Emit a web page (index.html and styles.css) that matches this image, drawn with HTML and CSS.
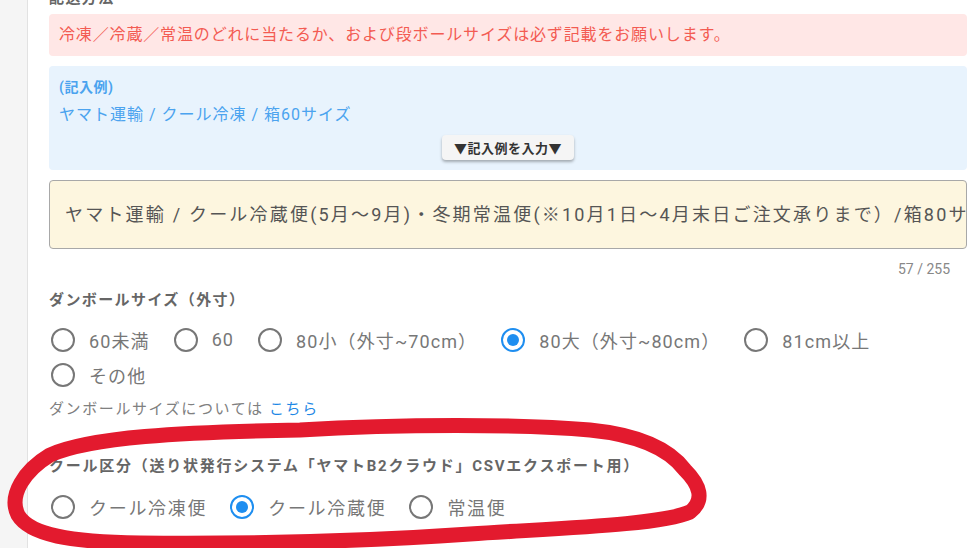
FILE: index.html
```html
<!DOCTYPE html>
<html lang="ja">
<head>
<meta charset="utf-8">
<title>配送方法</title>
<link rel="stylesheet" href="styles.css">
</head>
<body>
<div class="page">
  <aside class="rail"></aside>
  <main class="content">
    <div class="field-label cut">配送方法</div>
    <div class="alert">冷凍／冷蔵／常温のどれに当たるか、および段ボールサイズは必ず記載をお願いします。</div>
    <div class="example">
      <div class="ex-title">(記入例)</div>
      <div class="ex-text">ヤマト運輸 / クール冷凍 / 箱60サイズ</div>
      <div class="ex-action"><button class="ex-btn" type="button">▼記入例を入力▼</button></div>
    </div>
    <div class="textarea">ヤマト運輸 / クール冷蔵便(5月～9月)・冬期常温便(※10月1日～4月末日ご注文承りまで）/箱80サイズ</div>
    <div class="counter">57 / 255</div>

    <div class="field-label size-label">ダンボールサイズ（外寸）</div>
    <div class="radios size-radios">
      <label class="radio"><span class="circle"></span><span class="rtext">60未満</span></label>
      <label class="radio"><span class="circle"></span><span class="rtext">60</span></label>
      <label class="radio"><span class="circle"></span><span class="rtext">80小（外寸~70cm）</span></label>
      <label class="radio"><span class="circle on"></span><span class="rtext">80大（外寸~80cm）</span></label>
      <label class="radio"><span class="circle"></span><span class="rtext">81cm以上</span></label>
      <label class="radio"><span class="circle"></span><span class="rtext">その他</span></label>
    </div>
    <div class="hint">ダンボールサイズについては <a class="link">こちら</a></div>

    <div class="field-label cool-label">クール区分（送り状発行システム「ヤマトB2クラウド」CSVエクスポート用）</div>
    <div class="radios cool-radios">
      <label class="radio"><span class="circle"></span><span class="rtext">クール冷凍便</span></label>
      <label class="radio"><span class="circle on"></span><span class="rtext">クール冷蔵便</span></label>
      <label class="radio"><span class="circle"></span><span class="rtext">常温便</span></label>
    </div>
  </main>
  <svg class="scribble" viewBox="0 0 977 548" width="977" height="548" aria-hidden="true">
    <path d="M 300 430 C 400 424, 520 424, 590 430 C 640 435, 670 450, 685 470 C 700 485, 705 500, 690 512 C 660 525, 560 528, 470 534 C 370 541, 250 544, 140 543 C 70 542, 30 535, 18 515 C 8 495, 25 470, 50 455 C 90 437, 180 432, 300 430 Z" fill="none" stroke="#e31a2e" stroke-width="15" stroke-linejoin="round"/>
  </svg>
</div>
</body>
</html>
```

FILE: styles.css
```css
html, body {
  margin: 0;
  padding: 0;
  background: #ffffff;
}
body {
  font-family: Roboto, "Noto Sans CJK JP", sans-serif;
  overflow: hidden;
  width: 977px;
  height: 548px;
}
.page {
  position: relative;
  display: flex;
  width: 977px;
  height: 548px;
  overflow: hidden;
}
.rail {
  width: 27px;
  flex: none;
  background: #f5f5f5;
  border-right: 1px solid #e2e2e2;
}
.content {
  flex: 1;
  padding: 0 10px 0 21px;
  min-width: 0;
}
.field-label {
  font-size: 15px;
  line-height: 20px;
  font-weight: 700;
  color: #666666;
  letter-spacing: 1.4px;
}
.cut {
  margin-top: -12px;
}
.alert {
  margin-top: 6px;
  height: 42px;
  line-height: 41px;
  padding: 0 10px;
  border-radius: 4px;
  background: #ffe7e6;
  color: #f35b52;
  font-size: 16px;
  letter-spacing: 0.85px;
  white-space: nowrap;
}
.example {
  margin-top: 10px;
  background: #e8f3fd;
  border-radius: 4px;
  padding: 10px 10px 10px 10px;
  color: #4ba3ef;
}
.ex-title {
  font-size: 14px;
  line-height: 22px;
  font-weight: 700;
  letter-spacing: 0.5px;
}
.ex-text {
  margin-top: 4px;
  font-size: 16px;
  line-height: 26px;
  letter-spacing: 1px;
}
.ex-action {
  margin-top: 7px;
  display: flex;
  justify-content: center;
}
.ex-btn {
  height: 25px;
  width: 132px;
  border: none;
  border-radius: 4px;
  background: #f5f5f5;
  box-shadow: 0 2px 3px rgba(0, 0, 0, 0.3);
  font-family: Roboto, "Noto Sans CJK JP", sans-serif;
  font-size: 13px;
  font-weight: 700;
  color: #333333;
  padding: 0;
  letter-spacing: 0.5px;
}
.textarea {
  margin-top: 10px;
  height: 67px;
  line-height: 67px;
  border: 1px solid #a8a8a8;
  border-radius: 4px;
  background: #fdf6df;
  padding: 0 0 0 15px;
  font-size: 18px;
  color: #555555;
  white-space: nowrap;
  overflow: hidden;
  letter-spacing: 2.2px;
}
.counter {
  margin-top: 10px;
  line-height: 20px;
  font-size: 14px;
  color: #888888;
  text-align: right;
  padding-right: 17px;
}
.size-label {
  margin-top: 11px;
}
.radios {
  display: flex;
  flex-wrap: wrap;
}
.size-radios {
  margin-top: 12px;
}
.radio {
  display: flex;
  align-items: center;
  height: 35px;
  margin-right: 21px;
}
.size-radios .radio {
  margin-right: 22px;
}
.circle {
  box-sizing: border-box;
  width: 24px;
  height: 24px;
  margin-left: 2px;
  border: 2.5px solid #777777;
  border-radius: 50%;
  flex: none;
  display: flex;
  align-items: center;
  justify-content: center;
}
.circle.on {
  border-color: #1e8ef0;
}
.circle.on::after {
  content: "";
  width: 12px;
  height: 12px;
  border-radius: 50%;
  background: #1e8ef0;
}
.rtext {
  margin-left: 14px;
  font-size: 18px;
  color: #777777;
  letter-spacing: 1.7px;
  white-space: nowrap;
}
.size-radios .rtext {
  letter-spacing: 1.1px;
}
.hint {
  margin-top: 7px;
  line-height: 20px;
  font-size: 15px;
  color: #808080;
  letter-spacing: 1.6px;
}
.link {
  color: #1e88e5;
}
.cool-label {
  margin-top: 37px;
  letter-spacing: 1.75px;
}
.cool-radios {
  margin-top: 13px;
}
.scribble {
  position: absolute;
  left: 0;
  top: 0;
  pointer-events: none;
}
```
